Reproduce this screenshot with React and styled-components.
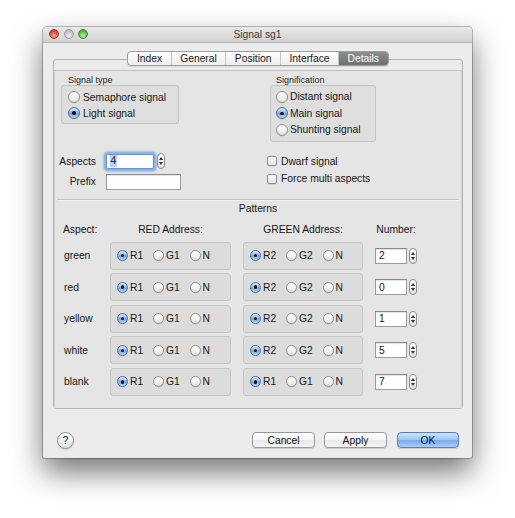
import React from 'react';
import styled, { createGlobalStyle } from 'styled-components';

const Global = createGlobalStyle`
  html, body { margin: 0; padding: 0; background: #ffffff; }
  body {
    font-family: "Liberation Sans", Arial, sans-serif;
    font-size: 10.3px;
    color: #161616;
  }
  * { box-sizing: border-box; }
`;

const Page = styled.div`
  width: 515px;
  height: 518px;
  padding: 27px 0 0 43px;
`;

const Window = styled.div`
  width: 429px;
  height: 431px;
  background: #ececec;
  border-radius: 4px 4px 2px 2px;
  box-shadow: 0 0 0 1px rgba(0, 0, 0, 0.25), 0 14px 30px rgba(0, 0, 0, 0.55);
  display: flex;
  flex-direction: column;
  overflow: hidden;
`;

const TitleBar = styled.div`
  height: 16px;
  flex: none;
  position: relative;
  display: flex;
  align-items: center;
  justify-content: center;
  background: linear-gradient(#e9e9e9, #d2d2d2);
  border-bottom: 1px solid #b4b4b4;
  color: #3a3a3a;
  font-size: 10.3px;
`;

const Lights = styled.div`
  position: absolute;
  left: 6px;
  top: 2px;
  display: flex;
  gap: 4.6px;
`;

const Light = styled.span`
  width: 10px;
  height: 10px;
  border-radius: 50%;
  border: 1px solid ${p => p.$edge};
  background: radial-gradient(circle at 50% 70%, ${p => p.$light}, ${p => p.$dark} 75%);
`;

const Body = styled.div`
  flex: 1;
  display: flex;
  flex-direction: column;
  padding: 8px 9px 11px 10px;
`;

const TabBar = styled.div`
  display: flex;
  justify-content: center;
  position: relative;
  z-index: 1;
  height: 15px;
`;

const TabStrip = styled.div`
  display: flex;
  border: 1px solid #9d9d9d;
  border-radius: 4px;
  overflow: hidden;
  background: linear-gradient(#ffffff, #ededed);
  box-shadow: 0 1px 1px rgba(0, 0, 0, 0.08);
`;

const Tab = styled.div`
  display: flex;
  align-items: center;
  padding: 0 ${p => p.$pad}px;
  line-height: 13px;
  border-left: ${p => (p.$first ? 'none' : '1px solid #c4c4c4')};
  color: ${p => (p.$active ? '#ffffff' : '#1a1a1a')};
  background: ${p => (p.$active ? 'linear-gradient(#8e8e8e, #6e6e6e)' : 'transparent')};
`;

const Frame = styled.div`
  margin-top: -7px;
  height: 350px;
  border: 1px solid #b2b2b2;
  border-radius: 3px;
  background: #ebebeb;
  padding-top: 10px;
  display: flex;
  flex-direction: column;
`;

const Panel = styled.div`
  flex: 1;
  border-top: 1px solid #c2c2c2;
  border-left: 1px solid #d2d2d2;
  border-right: 1px solid #d2d2d2;
  background: #e5e5e5;
  display: flex;
  flex-direction: column;
`;

const TopSection = styled.div`
  display: grid;
  grid-template-columns: 118px 106px;
  column-gap: 91px;
  align-items: start;
  padding: 4px 0 0 6px;
`;

const Group = styled.div`
  display: flex;
  flex-direction: column;
`;

const GroupTitle = styled.div`
  font-size: 9px;
  line-height: 10px;
  height: 10px;
  color: #2a2a2a;
  padding-left: ${p => p.$indent}px;
`;

const GroupBox = styled.div`
  border: 1px solid #c3c3c3;
  border-radius: 3px;
  background: #dedede;
  padding: ${p => p.$pad};
  display: flex;
  flex-direction: column;
`;

const OptionRow = styled.label`
  display: flex;
  align-items: center;
  height: ${p => p.$h}px;
  gap: ${p => p.$gap}px;
  white-space: nowrap;
`;

const RadioCircle = styled.span`
  flex: none;
  width: ${p => p.$size}px;
  height: ${p => p.$size}px;
  border-radius: 50%;
  border: 1px solid ${p => (p.$on ? '#4f6f9c' : '#8f8f8f')};
  background: ${p =>
    p.$on
      ? 'linear-gradient(#d7e8fc, #8dbaf0 48%, #6ba2ea 52%, #b9d7f8)'
      : 'linear-gradient(#ffffff, #f4f4f4 50%, #e2e2e2)'};
  box-shadow: 0 0.5px 0.5px rgba(0, 0, 0, 0.15);
  display: flex;
  align-items: center;
  justify-content: center;
  &::after {
    content: '';
    display: ${p => (p.$on ? 'block' : 'none')};
    width: 3.5px;
    height: 3.5px;
    border-radius: 50%;
    background: #121212;
  }
`;

const MiddleSection = styled.div`
  display: grid;
  grid-template-columns: 212px auto;
  margin-top: 11px;
`;

const FieldColumn = styled.div`
  display: flex;
  flex-direction: column;
  gap: 4px;
`;

const FieldRow = styled.div`
  display: flex;
  align-items: center;
  height: ${p => p.$h}px;
`;

const FieldLabel = styled.div`
  width: 41px;
  text-align: right;
  margin-right: 10px;
`;

const TextInput = styled.div`
  width: ${p => p.$w}px;
  height: ${p => p.$h}px;
  background: #ffffff;
  border: 1px solid ${p => (p.$focus ? '#6e8fc0' : '#9b9b9b')};
  border-top-color: ${p => (p.$focus ? '#6e8fc0' : '#8a8a8a')};
  box-shadow: ${p =>
    p.$focus ? '0 0 0 2px #8db3e8, 0 0 2px 3px rgba(120,160,225,0.5)' : 'inset 0 1px 1px rgba(0,0,0,0.12)'};
  border-radius: ${p => (p.$focus ? '2px' : '0')};
  display: flex;
  align-items: center;
  padding-left: 3px;
  font-size: 10.3px;
`;

const Selected = styled.span`
  background: #b6d2f6;
  padding: 0 0.5px;
  line-height: 12px;
`;

const StepperBox = styled.div`
  width: 8px;
  height: 16px;
  margin-left: ${p => p.$ml}px;
  border: 1px solid #8c8c8c;
  border-radius: 4px;
  background: linear-gradient(#ffffff, #e4e4e4);
  display: flex;
  flex-direction: column;
  align-items: center;
  justify-content: center;
  gap: 2px;
`;

const CheckColumn = styled.div`
  display: flex;
  flex-direction: column;
  gap: 0.5px;
`;

const CheckRow = styled.label`
  display: flex;
  align-items: center;
  height: 17px;
  gap: 4px;
`;

const CheckBox = styled.span`
  width: 10px;
  height: 10px;
  border: 1px solid #8e8e8e;
  border-radius: 2px;
  background: linear-gradient(#ffffff, #e6e6e6);
  box-shadow: 0 0.5px 0.5px rgba(0, 0, 0, 0.12);
`;

const Separator = styled.div`
  margin: 9px 2px 0;
  height: 2px;
  border-top: 1px solid #c4c4c4;
  border-bottom: 1px solid #f2f2f2;
`;

const SectionTitle = styled.div`
  text-align: center;
  line-height: 11px;
  margin-top: 2.5px;
`;

const PatternHeader = styled.div`
  display: grid;
  grid-template-columns: 35px 121px 120px 42px;
  column-gap: 12px;
  padding-left: 8px;
  margin-top: 9.5px;
  height: 12px;
  line-height: 12px;
`;

const PatternGrid = styled.div`
  display: grid;
  grid-template-columns: 35px 121px 120px 42px;
  column-gap: 12px;
  row-gap: 3.6px;
  grid-auto-rows: 28px;
  padding-left: 8px;
  margin-top: 6px;
  align-items: center;
`;

const HeaderCell = styled.div`
  text-align: ${p => p.$align || 'center'};
  white-space: nowrap;
`;

const AspectName = styled.div`
  padding-left: 1px;
`;

const AddrBox = styled.div`
  height: 28px;
  border: 1px solid #c6c6c6;
  border-radius: 3px;
  background: #dcdcdc;
  display: flex;
  align-items: center;
  padding-left: 6px;
`;

const AddrOption = styled.label`
  width: ${p => p.$w}px;
  display: flex;
  align-items: center;
  gap: 2px;
`;

const NumberCell = styled.div`
  display: flex;
  align-items: center;
`;

const Footer = styled.div`
  margin-top: 23px;
  height: 16px;
  display: flex;
  align-items: center;
  padding: 0 4px;
`;

const HelpButton = styled.div`
  width: 17px;
  height: 17px;
  border-radius: 50%;
  border: 1px solid #8f8f8f;
  background: linear-gradient(#ffffff, #e2e2e2);
  box-shadow: 0 1px 1px rgba(0, 0, 0, 0.15);
  display: flex;
  align-items: center;
  justify-content: center;
  font-size: 10.5px;
  color: #222;
`;

const Spacer = styled.div`
  flex: 1;
`;

const Button = styled.div`
  width: ${p => p.$w}px;
  height: 16px;
  margin-left: ${p => p.$ml}px;
  border-radius: 4px;
  border: 1px solid ${p => (p.$primary ? '#5a7fb6' : '#9a9a9a')};
  background: ${p =>
    p.$primary
      ? 'linear-gradient(#cfe3fb, #9cc3f3 50%, #78aaec 52%, #a8cdf7)'
      : 'linear-gradient(#ffffff, #f6f6f6 50%, #e9e9e9 52%, #f4f4f4)'};
  box-shadow: 0 1px 1px rgba(0, 0, 0, 0.15);
  display: flex;
  align-items: center;
  justify-content: center;
  color: #111;
`;

function Radio({ on, size = 11, label, gap = 2, h = 16 }) {
  return (
    <OptionRow $h={h} $gap={gap}>
      <RadioCircle $on={on} $size={size} />
      <span>{label}</span>
    </OptionRow>
  );
}

function Stepper({ ml = 2 }) {
  return (
    <StepperBox $ml={ml}>
      <svg width="4" height="3" viewBox="0 0 4 3"><path d="M2 0 L4 3 L0 3 Z" fill="#333" /></svg>
      <svg width="4" height="3" viewBox="0 0 4 3"><path d="M0 0 L4 0 L2 3 Z" fill="#333" /></svg>
    </StepperBox>
  );
}

function AddressGroup({ opts, sel }) {
  const widths = [36, 36.5, 30];
  return (
    <AddrBox>
      {opts.map((o, i) => (
        <AddrOption key={o} $w={widths[i]}>
          <RadioCircle $on={i === sel} $size={11} />
          <span>{o}</span>
        </AddrOption>
      ))}
    </AddrBox>
  );
}

const rows = [
  { name: 'green', red: ['R1', 'G1', 'N'], green: ['R2', 'G2', 'N'], num: '2' },
  { name: 'red', red: ['R1', 'G1', 'N'], green: ['R2', 'G2', 'N'], num: '0' },
  { name: 'yellow', red: ['R1', 'G1', 'N'], green: ['R2', 'G2', 'N'], num: '1' },
  { name: 'white', red: ['R1', 'G1', 'N'], green: ['R2', 'G2', 'N'], num: '5' },
  { name: 'blank', red: ['R1', 'G1', 'N'], green: ['R1', 'G1', 'N'], num: '7' },
];

const tabs = [
  { label: 'Index', pad: 8.5 },
  { label: 'General', pad: 8.5 },
  { label: 'Position', pad: 8.5 },
  { label: 'Interface', pad: 8.5 },
  { label: 'Details', pad: 8.5, active: true },
];

export default function App() {
  return (
    <>
      <Global />
      <Page>
        <Window>
          <TitleBar>
            <Lights>
              <Light $light="#f7a3a0" $dark="#d5382f" $edge="#a8332d" />
              <Light $light="#eeeeee" $dark="#b9b9b9" $edge="#9a9a9a" />
              <Light $light="#c4f2a6" $dark="#46ad31" $edge="#3f8a2e" />
            </Lights>
            Signal sg1
          </TitleBar>
          <Body>
            <TabBar>
              <TabStrip>
                {tabs.map((t, i) => (
                  <Tab key={t.label} $first={i === 0} $pad={t.pad} $active={t.active}>
                    {t.label}
                  </Tab>
                ))}
              </TabStrip>
            </TabBar>
            <Frame>
              <Panel>
                <TopSection>
                  <Group>
                    <GroupTitle $indent={7}>Signal type</GroupTitle>
                    <GroupBox $pad="3px 0 2px 6px">
                      <Radio size={12} gap={3} label="Semaphore signal" />
                      <Radio size={12} gap={3} on label="Light signal" />
                    </GroupBox>
                  </Group>
                  <Group>
                    <GroupTitle $indent={6}>Signification</GroupTitle>
                    <GroupBox $pad="2.5px 0 2.5px 5px">
                      <Radio size={12} gap={2} h={16.5} label="Distant signal" />
                      <Radio size={12} gap={2} h={16.5} on label="Main signal" />
                      <Radio size={12} gap={2} h={16.5} label="Shunting signal" />
                    </GroupBox>
                  </Group>
                </TopSection>

                <MiddleSection>
                  <FieldColumn>
                    <FieldRow $h={17}>
                      <FieldLabel>Aspects</FieldLabel>
                      <TextInput $w={48} $h={15} $focus>
                        <Selected>4</Selected>
                      </TextInput>
                      <Stepper ml={3} />
                    </FieldRow>
                    <FieldRow $h={16}>
                      <FieldLabel>Prefix</FieldLabel>
                      <TextInput $w={75} $h={16} />
                    </FieldRow>
                  </FieldColumn>
                  <CheckColumn>
                    <CheckRow>
                      <CheckBox />
                      <span>Dwarf signal</span>
                    </CheckRow>
                    <CheckRow>
                      <CheckBox />
                      <span>Force multi aspects</span>
                    </CheckRow>
                  </CheckColumn>
                </MiddleSection>

                <Separator />
                <SectionTitle>Patterns</SectionTitle>

                <PatternHeader>
                  <HeaderCell $align="left">Aspect:</HeaderCell>
                  <HeaderCell>RED Address:</HeaderCell>
                  <HeaderCell>GREEN Address:</HeaderCell>
                  <HeaderCell>Number:</HeaderCell>
                </PatternHeader>
                <PatternGrid>
                  {rows.map(r => (
                    <React.Fragment key={r.name}>
                      <AspectName>{r.name}</AspectName>
                      <AddressGroup opts={r.red} sel={0} />
                      <AddressGroup opts={r.green} sel={0} />
                      <NumberCell>
                        <TextInput $w={32} $h={16}>{r.num}</TextInput>
                        <Stepper ml={2} />
                      </NumberCell>
                    </React.Fragment>
                  ))}
                </PatternGrid>
              </Panel>
            </Frame>
            <Footer>
              <HelpButton>?</HelpButton>
              <Spacer />
              <Button $w={63}>Cancel</Button>
              <Button $w={63} $ml={9}>Apply</Button>
              <Button $w={62} $ml={10} $primary>OK</Button>
            </Footer>
          </Body>
        </Window>
      </Page>
    </>
  );
}
